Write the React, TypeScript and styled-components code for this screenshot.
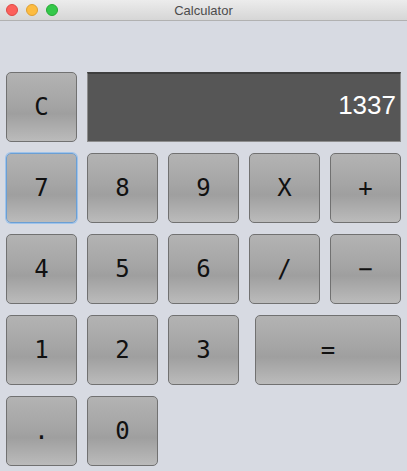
import styled, { createGlobalStyle } from "styled-components";
import * as React from "react";

const GlobalStyle = createGlobalStyle`
  html, body {
    margin: 0;
    padding: 0;
    background: #d7dae2;
  }
  body {
    font-family: "Liberation Sans", Arial, sans-serif;
  }
`;

const Window = styled.div`
  width: 407px;
  height: 471px;
  background: #d7dae2;
  display: flex;
  flex-direction: column;
  overflow: hidden;
`;

const TitleBar = styled.div`
  height: 20px;
  flex: none;
  position: relative;
  display: flex;
  align-items: center;
  justify-content: center;
  background: linear-gradient(#ececec, #d6d6d6);
  border-bottom: 1px solid #b1b1b1;
  font-family: "Liberation Sans", Arial, sans-serif;
  font-size: 13px;
  color: #4c4c4c;
`;

const Lights = styled.div`
  position: absolute;
  left: 6px;
  top: 4px;
  display: flex;
  gap: 8px;
`;

const Light = styled.span<{ color: string; edge: string }>`
  width: 12px;
  height: 12px;
  border-radius: 50%;
  box-sizing: border-box;
  background: ${({ color }) => color};
  border: 1px solid ${({ edge }) => edge};
`;

const Pad = styled.div`
  display: grid;
  grid-template-columns: repeat(5, 71px);
  grid-auto-rows: 70px;
  column-gap: 10px;
  row-gap: 11px;
  padding: 51px 6px 0;
`;

const Display = styled.div`
  grid-column: 2 / span 4;
  box-sizing: border-box;
  background: #565656;
  border: 1px solid #8d8d8d;
  border-top: 2px solid #3e3e3e;
  display: flex;
  align-items: center;
  justify-content: flex-end;
  padding: 0 4px 4px 0;
  color: #fff;
  font-family: "Liberation Sans", Arial, sans-serif;
  font-size: 26px;
`;

const Key = styled.button<{ focused?: boolean; wide?: boolean }>`
  box-sizing: border-box;
  margin: 0;
  padding: 0;
  border-radius: 5px;
  border: 1px solid ${({ focused }) => (focused ? "#6b9fd4" : "#717171")};
  box-shadow: ${({ focused }) => (focused ? "0 0 0 1px #9fc3ea" : "none")};
  background: linear-gradient(#b3b3b3 0%, #a5a5a5 45%, #9f9f9f 60%, #bbbbbb 100%);
  font-family: "DejaVu Sans Mono", "Liberation Mono", monospace;
  font-size: 24px;
  color: #111;
  display: flex;
  align-items: center;
  justify-content: center;
  ${({ wide }) => (wide ? "grid-column: 4 / span 2; margin-left: 6px;" : "")}
`;

const keys: { label: string; focused?: boolean; wide?: boolean }[] = [
  { label: "7", focused: true },
  { label: "8" },
  { label: "9" },
  { label: "X" },
  { label: "+" },
  { label: "4" },
  { label: "5" },
  { label: "6" },
  { label: "/" },
  { label: "−" },
  { label: "1" },
  { label: "2" },
  { label: "3" },
  { label: "=", wide: true },
  { label: "." },
  { label: "0" },
];

const App: React.FC = () => {
  return (
    <Window>
      <GlobalStyle />
      <TitleBar>
        <Lights>
          <Light color="#fc605b" edge="#de4a45" />
          <Light color="#fdbc40" edge="#dea032" />
          <Light color="#34c84a" edge="#27aa35" />
        </Lights>
        Calculator
      </TitleBar>
      <Pad>
        <Key>C</Key>
        <Display>1337</Display>
        {keys.map((k) => (
          <Key key={k.label} focused={k.focused} wide={k.wide}>
            {k.label}
          </Key>
        ))}
      </Pad>
    </Window>
  );
};

export default App;
